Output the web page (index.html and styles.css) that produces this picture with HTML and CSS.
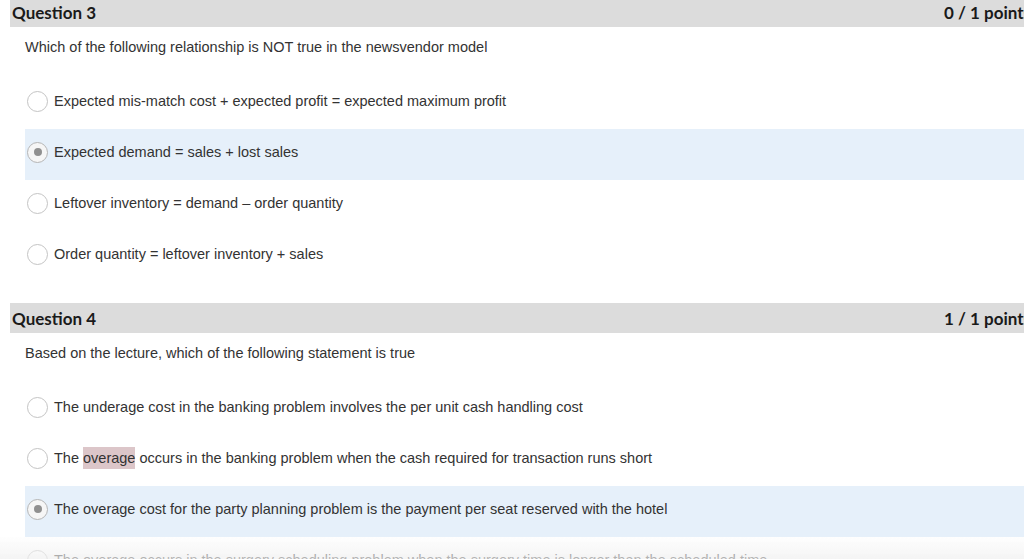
FILE: index.html
```html
<!DOCTYPE html>
<html>
<head>
<meta charset="utf-8">
<link rel="stylesheet" href="styles.css">
</head>
<body>
<div class="page">
  <section class="question first">
    <div class="q-head"><span class="q-title">Question 3</span><span class="q-score">0 / 1 points</span></div>
    <div class="q-text">Which of the following relationship is NOT true in the newsvendor model</div>
    <div class="options">
      <div class="option"><span class="radio"></span><span class="label">Expected mis-match cost + expected profit = expected maximum profit</span></div>
      <div class="option selected"><span class="radio"></span><span class="label">Expected demand = sales + lost sales</span></div>
      <div class="option"><span class="radio"></span><span class="label">Leftover inventory = demand – order quantity</span></div>
      <div class="option"><span class="radio"></span><span class="label">Order quantity = leftover inventory + sales</span></div>
    </div>
  </section>
  <section class="question">
    <div class="q-head"><span class="q-title">Question 4</span><span class="q-score">1 / 1 points</span></div>
    <div class="q-text">Based on the lecture, which of the following statement is true</div>
    <div class="options">
      <div class="option"><span class="radio"></span><span class="label">The underage cost in the banking problem involves the per unit cash handling cost</span></div>
      <div class="option"><span class="radio"></span><span class="label">The <mark class="hl">overage</mark> occurs in the banking problem when the cash required for transaction runs short</span></div>
      <div class="option selected"><span class="radio"></span><span class="label">The overage cost for the party planning problem is the payment per seat reserved with the hotel</span></div>
      <div class="option"><span class="radio"></span><span class="label">The overage occurs in the surgery scheduling problem when the surgery time is longer than the scheduled time</span></div>
    </div>
  </section>
</div>
<div class="fade"></div>
</body>
</html>
```
FILE: styles.css
```css
html, body {
  margin: 0;
  padding: 0;
  background: #ffffff;
  overflow: hidden;
  height: 559px;
}
.page {
  padding-left: 10px;
  width: 1023px;
  font-family: "Liberation Sans", Arial, Helvetica, sans-serif;
  color: #333333;
}
.question.first {
  margin-top: -3px;
}
.question + .question {
  margin-top: 21px;
}
.q-head {
  height: 30px;
  background: #dcdcdc;
  display: flex;
  justify-content: space-between;
  align-items: center;
  padding: 0 2px;
  font-family: Lato, "Liberation Sans", sans-serif;
  font-weight: 700;
  font-size: 17px;
  color: #1a1a1a;
}
.q-text {
  margin: 13px 0 0 15px;
  font-size: 14.5px;
  line-height: 15px;
  height: 15px;
}
.options {
  margin-top: 23px;
  margin-left: 15px;
}
.option {
  height: 51px;
  display: flex;
  align-items: center;
  padding-left: 2px;
  font-size: 14.5px;
  padding-bottom: 5px;
  box-sizing: border-box;
}
.option.selected {
  background: #e6f0fa;
}
.radio {
  width: 19px;
  height: 19px;
  border: 1px solid #c4c4c4;
  border-radius: 50%;
  background: #ffffff;
  margin-right: 6px;
  flex: none;
  display: flex;
  align-items: center;
  justify-content: center;
  box-sizing: content-box;
}
.option.selected .radio {
  border-color: #b5b5b5;
  background: #f6f6f6;
}
.option.selected .radio::after {
  content: "";
  width: 8px;
  height: 8px;
  border-radius: 50%;
  background: #909090;
}
.label {
  white-space: nowrap;
}
.hl {
  background: #dcc6c9;
  color: inherit;
  padding: 3px 0;
}
.fade {
  position: fixed;
  left: 0;
  right: 0;
  bottom: 0;
  height: 22px;
  background: linear-gradient(rgba(252,252,252,0.35), rgba(240,240,240,0.7));
}
```
